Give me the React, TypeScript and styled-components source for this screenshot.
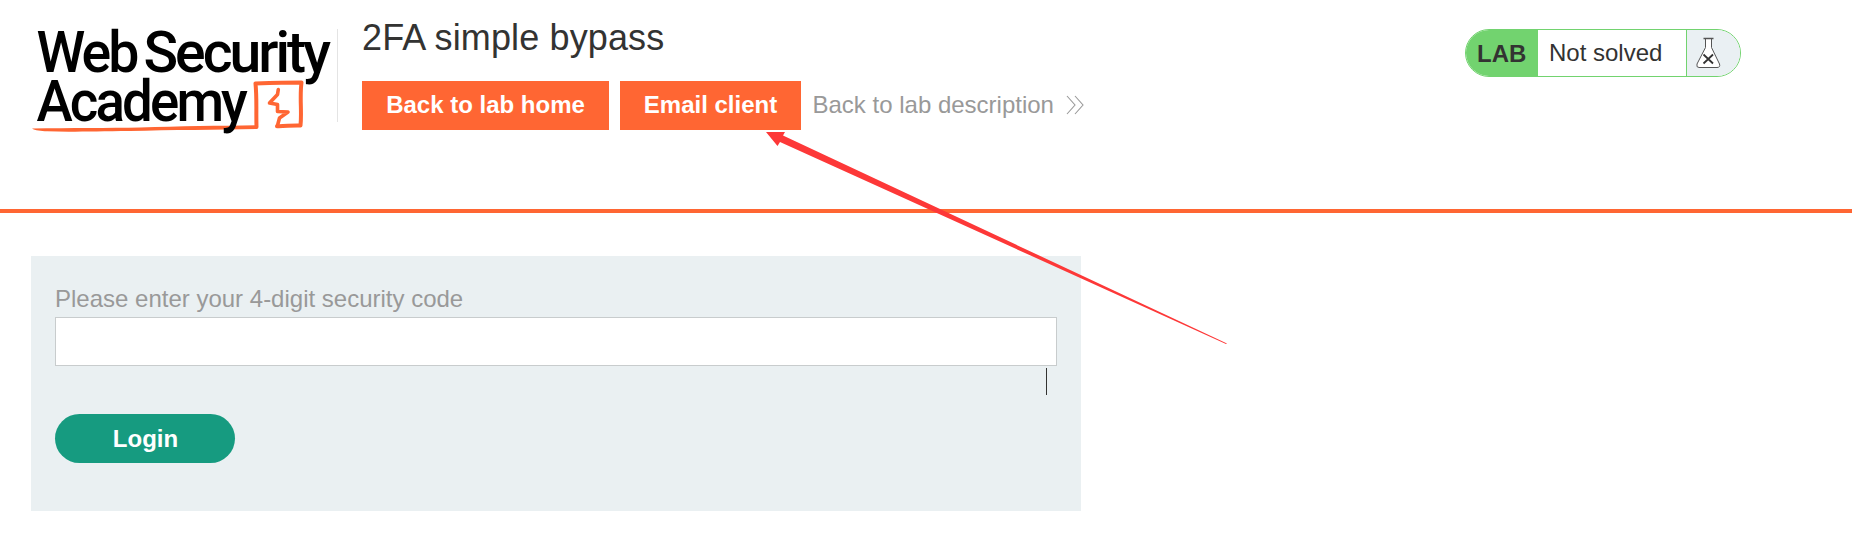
import React from "react";
import styled, { createGlobalStyle } from "styled-components";

const GlobalStyle = createGlobalStyle`
  * { box-sizing: border-box; }
  body {
    margin: 0;
    background: #fff;
    color: #333332;
    font-family: "Liberation Sans", Arial, sans-serif;
    font-size: 24px;
  }
`;

const Page = styled.div`
  position: relative;
  height: 559px;
  overflow: hidden;
`;

const Header = styled.header`
  display: flex;
  align-items: flex-start;
  height: 213px;
  padding: 0 111px 0 31px;
  border-bottom: 4px solid #ff6633;
`;

const LogoLink = styled.a`
  display: block;
  width: 307px;
  height: 93px;
  margin-top: 29px;
  border-right: 1px solid #e4e4e4;
`;

const LogoSvg = styled.svg`
  display: block;
  overflow: visible;
`;

const TitleBlock = styled.div`
  margin-left: 24px;
  flex: 1;
`;

const Title = styled.h2`
  margin: 17px 0 0;
  font-size: 36px;
  line-height: 41px;
  font-weight: 400;
  letter-spacing: 0.13px;
`;

const Actions = styled.nav`
  display: flex;
  align-items: center;
  margin-top: 23px;
  height: 49px;
`;

const ActionButton = styled.a<{ $width: number }>`
  width: ${(p) => p.$width}px;
  height: 49px;
  margin-right: 11px;
  background: #ff6633;
  color: #fff;
  font-weight: 700;
  line-height: 48px;
  text-align: center;
  white-space: nowrap;
`;

const BackLink = styled.a`
  display: flex;
  align-items: center;
  height: 49px;
  padding-left: 0.5px;
  color: #999;
  line-height: 47px;
  white-space: nowrap;
  span { height: 49px; }
  svg { margin: -1px 0 0 12px; }
`;

const Status = styled.div`
  display: flex;
  width: 276px;
  height: 48px;
  margin-top: 29px;
  border: 1px solid #72d36f;
  border-radius: 24px;
  overflow: hidden;
  line-height: 46px;
`;

const StatusTag = styled.span`
  width: 72px;
  padding-left: 11px;
  background: #72d36f;
  font-weight: 700;
  line-height: 47px;
`;

const StatusText = styled.span`
  flex: 1;
  padding-left: 11px;
  line-height: 45px;
`;

const StatusIcon = styled.span`
  width: 54px;
  padding: 7px 0 0 9px;
  border-left: 1px solid #72d36f;
  background: #eaf0f3;
  svg { display: block; }
`;

const LoginForm = styled.form`
  width: 1050px;
  height: 255px;
  margin: 43px 0 0 31px;
  padding: 29px 24px 0;
  background: #eaf0f2;
`;

const Label = styled.label`
  display: block;
  height: 32px;
  color: #999;
  line-height: 28px;
`;

const CodeInput = styled.input`
  display: block;
  width: 100%;
  height: 49px;
  padding: 0 12px;
  border: 1px solid #c8cccd;
  border-radius: 0;
  background: #fff;
  font: inherit;
  outline: none;
`;

const LoginButton = styled.button`
  display: block;
  width: 180px;
  height: 49px;
  margin-top: 48px;
  padding: 0 0 0 1px;
  border: 0;
  border-radius: 25px;
  background: #169b80;
  color: #fff;
  font: 700 24px/49px "Liberation Sans", Arial, sans-serif;
`;

const Annotation = styled.svg`
  position: absolute;
  left: 0;
  top: 0;
  pointer-events: none;
`;

const TextCursor = styled.span`
  position: absolute;
  left: 1046px;
  top: 368px;
  width: 1px;
  height: 27px;
  background: #333332;
`;

const Logo = () => (
  <LogoSvg width="306" height="110" viewBox="31 29 306 110">
    <g fill="none" stroke="#ff6633" strokeLinejoin="round" strokeLinecap="round">
      <path d="M256.500 127 C256 112 257 98 255.500 83.500 C270 83 286 82.500 301.500 82.500 C299.500 97 302 112 300.500 125.500 C292 125 285 126.500 277 126.200" strokeWidth="4" />
      <path d="M277.500 125.500 L279.500 118 L288 112 L277.500 111.500 L277.500 104.500 L269.500 103 L277.500 94.500 L278.300 89.500" strokeWidth="3.600" />
    </g>
    <path fill="#ff6633" d="M32 128.500 C70 128 110 128 140 127.500 C180 126 220 125.800 257 125.200 L257 128.900 C220 129.700 170 129.800 130 131 C95 131.200 70 132.200 47 131.300 C41 131 35 130.500 32 128.500Z" />
    <g fill="#000" fontFamily='Roboto, "Liberation Sans", sans-serif' fontSize="57" fontWeight="500" letterSpacing="-3">
      <text x="36.500" y="72.300" textLength="100" lengthAdjust="spacingAndGlyphs">Web</text>
      <text x="143.500" y="72.300" textLength="184.500" lengthAdjust="spacingAndGlyphs">Security</text>
      <text x="36.500" y="120.700" textLength="208.500" lengthAdjust="spacingAndGlyphs">Academy</text>
    </g>
  </LogoSvg>
);

const DoubleChevron = () => (
  <svg width="18" height="20" viewBox="0 0 18 20" fill="none" stroke="#999" strokeWidth="1.1">
    <path d="M1 1 L9 10 L1 19 M9 1 L17 10 L9 19" />
  </svg>
);

const Flask = () => (
  <svg width="25" height="32" viewBox="0 0 25 32">
    <path d="M9.500 2 V10.500 L1 27 Q0 30.500 3 30.500 H21 Q24.500 30.500 23.500 27 L15.500 10.500 V2" fill="#fff" stroke="#555" strokeWidth="1" />
    <path d="M7.500 1.500 H17.500" stroke="#555" strokeWidth="1.500" />
    <path d="M7.500 17.500 L17 26.500 M17 17.500 L7.500 26.500" stroke="#333" strokeWidth="1.800" />
  </svg>
);

export default function App() {
  return (
    <Page>
      <GlobalStyle />
      <Header>
        <LogoLink><Logo /></LogoLink>
        <TitleBlock>
          <Title>2FA simple bypass</Title>
          <Actions>
            <ActionButton $width={247}>Back to lab home</ActionButton>
            <ActionButton $width={181}>Email client</ActionButton>
            <BackLink><span>Back to lab description</span><DoubleChevron /></BackLink>
          </Actions>
        </TitleBlock>
        <Status>
          <StatusTag>LAB</StatusTag>
          <StatusText>Not solved</StatusText>
          <StatusIcon><Flask /></StatusIcon>
        </Status>
      </Header>
      <LoginForm>
        <Label htmlFor="code">Please enter your 4-digit security code</Label>
        <CodeInput id="code" />
        <LoginButton type="button">Login</LoginButton>
      </LoginForm>
      <TextCursor />
      <Annotation width="1852" height="559">
        <path fill="#fd3838" d="M766 132 L785 132 L783 135.500 L1227 343.500 L1226 344 L780 142 L777.500 146 Z" />
      </Annotation>
    </Page>
  );
}
